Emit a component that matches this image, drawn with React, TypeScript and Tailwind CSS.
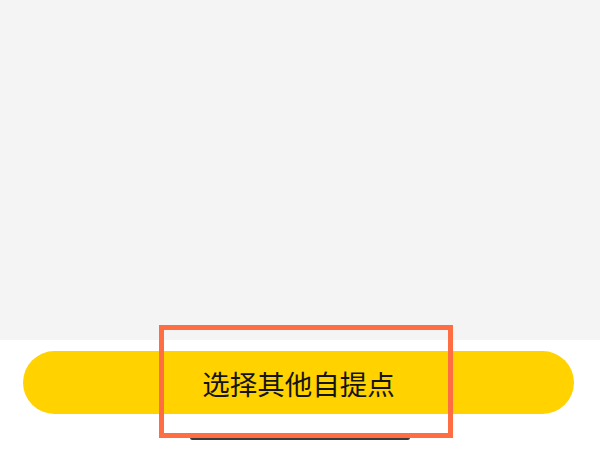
export default function App() {
  return (
    <div
      className="relative flex h-[450px] w-[600px] flex-col overflow-hidden bg-white"
      style={{ fontFamily: '"Noto Sans CJK SC", "Noto Sans", sans-serif' }}
    >
      {/* map / list area */}
      <div className="h-[340px] w-full bg-[#f4f4f4]" />

      {/* bottom action bar */}
      <div className="flex flex-1 flex-col bg-white px-[23px] pt-[11px]">
        <button className="flex h-[63px] w-[551px] items-center justify-center rounded-full bg-[#ffd200] text-[27.5px] leading-none text-[#141414]">
          <span className="mt-[3px]">选择其他自提点</span>
        </button>
      </div>

      {/* home indicator */}
      <div className="absolute left-[190px] top-[435px] h-[5px] w-[220px] rounded-full bg-[#3a3a3a]" />

      {/* highlight box */}
      <div className="pointer-events-none absolute left-[159px] top-[325px] h-[113px] w-[294px] border-[5px] border-[#ff6e42]" />
    </div>
  )
}
